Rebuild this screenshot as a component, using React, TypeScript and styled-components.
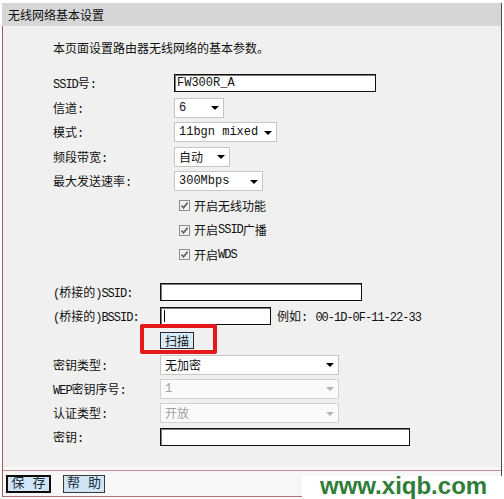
import React from 'react';
import styled, { createGlobalStyle } from 'styled-components';

const GlobalStyle = createGlobalStyle`
  html, body {
    margin: 0;
    padding: 0;
    background: #ffffff;
  }
  body {
    font-family: 'Liberation Mono', 'Noto Sans CJK SC', monospace;
    font-size: 12px;
    color: #111;
  }
`;

const Page = styled.div`
  position: relative;
  width: 504px;
  height: 499px;
  padding-top: 3px;
  box-sizing: border-box;
  overflow: hidden;
`;

const Frame = styled.div`
  margin-left: 2px;
  width: 500px;
  box-sizing: border-box;
  border-left: 1px solid #a65a5a;
  border-right: 1px solid #4a4a4a;
  border-bottom: 1px solid #b07070;
  background: #f7f7f7;
`;

const TitleBar = styled.div`
  height: 23px;
  line-height: 23px;
  margin-left: -1px;
  padding-left: 6px;
  background: #d6d6d6;
  font-family: 'Noto Sans CJK SC', sans-serif;
  font-size: 12px;
  color: #111;
`;

const Panel = styled.div`
  height: 441px;
  box-sizing: border-box;
  padding: 9px 0 0 50px;
  background: #f0f0f0;
`;

const Intro = styled.div`
  height: 24px;
  display: flex;
  align-items: center;
  font-family: 'Noto Sans CJK SC', sans-serif;
`;

const Section = styled.div<{ $top: number }>`
  margin-top: ${p => p.$top}px;
  display: flex;
  flex-direction: column;
`;

const Row = styled.div<{ $h: number }>`
  height: ${p => p.$h}px;
  display: flex;
  align-items: center;
`;

const Label = styled.div<{ $w: number }>`
  width: ${p => p.$w}px;
  flex-shrink: 0;
  white-space: nowrap;
`;

const Narrow = styled.span`
  letter-spacing: -1px;
`;

const TextInput = styled.input<{ $w: number }>`
  width: ${p => p.$w}px;
  height: 18px;
  box-sizing: border-box;
  margin: 0;
  padding: 0 0 0 2px;
  border: 1px solid #111;
  box-shadow: inset 1px 1px 0 #7a7a7a;
  background: #fff;
  font-family: 'Liberation Mono', monospace;
  font-size: 12px;
  color: #111;
  outline: none;
`;

const CaretField = styled.div`
  position: relative;
  display: flex;
`;

const Caret = styled.span`
  position: absolute;
  left: 4px;
  top: 3px;
  width: 1px;
  height: 12px;
  background: #000;
`;

const SelectBox = styled.div<{ $w: number; $disabled?: boolean }>`
  width: ${p => p.$w}px;
  height: 20px;
  box-sizing: border-box;
  display: flex;
  align-items: center;
  justify-content: space-between;
  padding: 0 4px 0 4px;
  border: 1px solid ${p => (p.$disabled ? '#d2d2d2' : '#c6c6c6')};
  background: ${p => (p.$disabled ? '#fafafa' : '#ffffff')};
  color: ${p => (p.$disabled ? '#a0a0a0' : '#111')};
  white-space: nowrap;
`;

const Arrow = styled.span<{ $disabled?: boolean }>`
  width: 0;
  height: 0;
  border-left: 4px solid transparent;
  border-right: 4px solid transparent;
  border-top: 4px solid ${p => (p.$disabled ? '#b4b4b4' : '#000')};
  margin-top: 1px;
`;

const CheckRow = styled.label`
  display: flex;
  align-items: center;
  margin-left: 5px;
`;

const CheckBox = styled.span`
  width: 11px;
  height: 11px;
  box-sizing: border-box;
  border: 1px solid #8c8c8c;
  background: #f3f3f3;
  display: flex;
  align-items: center;
  justify-content: center;
  margin-right: 4px;
`;

const Hint = styled.span`
  margin-left: 6px;
  white-space: nowrap;
`;

const ScanWrap = styled.div`
  position: relative;
  display: flex;
`;

const ScanButton = styled.button`
  width: 34px;
  height: 17px;
  margin: 0;
  padding: 0;
  border: 1px solid #2a2a2a;
  background: #d6ecf8;
  font-family: 'Noto Sans CJK SC', sans-serif;
  font-size: 12px;
  line-height: 15px;
  color: #111;
`;

const Highlight = styled.span`
  position: absolute;
  left: -20px;
  top: -8px;
  width: 77px;
  height: 30px;
  box-sizing: border-box;
  border: 4px solid #e3191c;
  border-radius: 2px;
  pointer-events: none;
`;

const Footer = styled.div`
  margin-top: 3px;
  height: 25px;
  border-top: 1px solid #c48c8c;
  display: flex;
  align-items: center;
  gap: 12px;
  padding-left: 3px;
`;

const FooterButton = styled.button<{ $primary?: boolean; $w: number }>`
  width: ${p => p.$w}px;
  height: 18px;
  margin: 0;
  padding: 0;
  box-sizing: border-box;
  border: ${p => (p.$primary ? '2px solid #0d0d0d' : '1px solid #3a3a3a')};
  background: #cfe5f5;
  font-family: 'Liberation Mono', 'Noto Sans CJK SC', monospace;
  font-size: 13px;
  line-height: 14px;
  color: #1a2a3a;
  white-space: pre;
`;

const Watermark = styled.div`
  position: absolute;
  left: 302px;
  top: 476px;
  width: 202px;
  height: 23px;
  padding-left: 18px;
  box-sizing: border-box;
  background: #ffffff;
  font-family: 'Liberation Sans', Arial, sans-serif;
  font-weight: bold;
  font-size: 24px;
  line-height: 19px;
  color: #2f7d38;
  white-space: nowrap;
`;

const Check = () => (
  <CheckBox>
    <svg width="9" height="9" viewBox="0 0 9 9">
      <path d="M1.5 4.5 L3.5 6.8 L7.6 1.6" fill="none" stroke="#666" strokeWidth="1.7" />
    </svg>
  </CheckBox>
);

const Select: React.FC<{ w: number; value: string; disabled?: boolean }> = ({ w, value, disabled }) => (
  <SelectBox $w={w} $disabled={disabled}>
    <span>{value}</span>
    <Arrow $disabled={disabled} />
  </SelectBox>
);

const UPPER_LABEL = 121;
const LOWER_LABEL = 107;
const UPPER_ROW = 24.5;
const LOWER_ROW = 24.2;

const App: React.FC = () => {
  return (
    <Page>
      <GlobalStyle />
      <Frame>
        <TitleBar>无线网络基本设置</TitleBar>
        <Panel>
          <Intro>本页面设置路由器无线网络的基本参数。</Intro>

          <Section $top={12}>
            <Row $h={UPPER_ROW}>
              <Label $w={UPPER_LABEL}><Narrow>SSID</Narrow>号:</Label>
              <TextInput $w={202} defaultValue="FW300R_A" />
            </Row>
            <Row $h={UPPER_ROW}>
              <Label $w={UPPER_LABEL}>信道:</Label>
              <Select w={50} value="6" />
            </Row>
            <Row $h={UPPER_ROW}>
              <Label $w={UPPER_LABEL}>模式:</Label>
              <Select w={103} value="11bgn mixed" />
            </Row>
            <Row $h={UPPER_ROW}>
              <Label $w={UPPER_LABEL}>频段带宽:</Label>
              <Select w={56} value="自动" />
            </Row>
            <Row $h={UPPER_ROW}>
              <Label $w={UPPER_LABEL}>最大发送速率:</Label>
              <Select w={89} value="300Mbps" />
            </Row>
            <Row $h={UPPER_ROW}>
              <Label $w={UPPER_LABEL} />
              <CheckRow><Check />开启无线功能</CheckRow>
            </Row>
            <Row $h={UPPER_ROW}>
              <Label $w={UPPER_LABEL} />
              <CheckRow><Check />开启<Narrow>SSID</Narrow>广播</CheckRow>
            </Row>
            <Row $h={UPPER_ROW}>
              <Label $w={UPPER_LABEL} />
              <CheckRow><Check />开启<Narrow>WDS</Narrow></CheckRow>
            </Row>
          </Section>

          <Section $top={13}>
            <Row $h={LOWER_ROW}>
              <Label $w={LOWER_LABEL}><Narrow>(</Narrow>桥接的<Narrow>)SSID</Narrow>:</Label>
              <TextInput $w={202} />
            </Row>
            <Row $h={LOWER_ROW}>
              <Label $w={LOWER_LABEL}><Narrow>(</Narrow>桥接的<Narrow>)BSSID</Narrow>:</Label>
              <CaretField>
                <TextInput $w={111} />
                <Caret />
              </CaretField>
              <Hint>例如: <Narrow>00-1D-0F-11-22-33</Narrow></Hint>
            </Row>
            <Row $h={LOWER_ROW}>
              <Label $w={LOWER_LABEL} />
              <ScanWrap>
                <ScanButton>扫描</ScanButton>
                <Highlight />
              </ScanWrap>
            </Row>
            <Row $h={LOWER_ROW}>
              <Label $w={LOWER_LABEL}>密钥类型:</Label>
              <Select w={179} value="无加密" />
            </Row>
            <Row $h={LOWER_ROW}>
              <Label $w={LOWER_LABEL}><Narrow>WEP</Narrow>密钥序号:</Label>
              <Select w={179} value="1" disabled />
            </Row>
            <Row $h={LOWER_ROW}>
              <Label $w={LOWER_LABEL}>认证类型:</Label>
              <Select w={179} value="开放" disabled />
            </Row>
            <Row $h={LOWER_ROW}>
              <Label $w={LOWER_LABEL}>密钥:</Label>
              <TextInput $w={250} />
            </Row>
          </Section>
        </Panel>
        <Footer>
          <FooterButton $primary $w={45}>保 存</FooterButton>
          <FooterButton $w={42}>帮 助</FooterButton>
        </Footer>
      </Frame>
      <Watermark>www.xiqb.com</Watermark>
    </Page>
  );
};

export default App;
